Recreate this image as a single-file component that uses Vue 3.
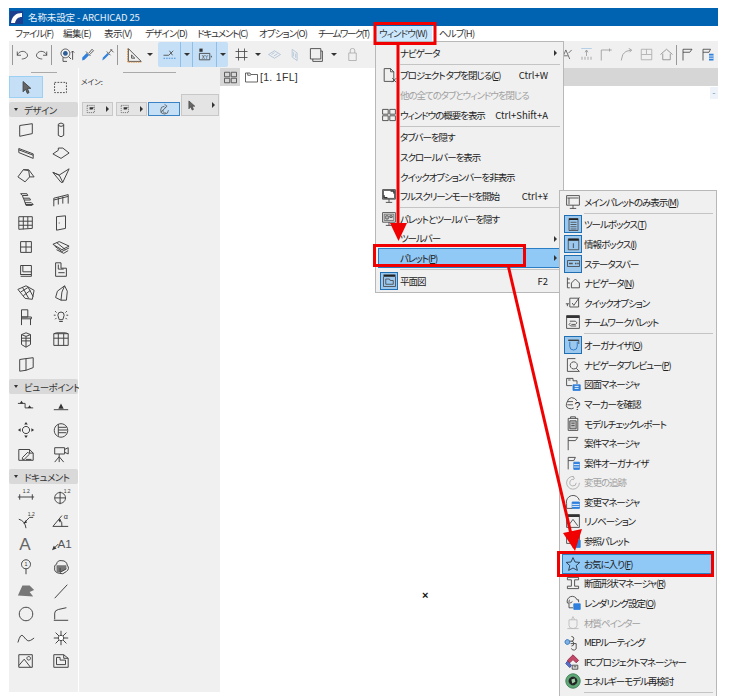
<script setup>
import { h } from 'vue'

// s = stroke path, object = filled path or little text
const BLUE = '#2f7fdc'
const ICONS = {
  wall: ['M3 5L17 3V14L3 17Z'],
  column: ['M7 3.5Q10 1 13 3.5V16Q10 19 7 16Z', 'M7 5Q10 7 13 5'],
  beam: ['M2 5L18 11V16L2 9.5Z', 'M2 6.5L18 12.5'],
  slab: ['M1 11L7 7V4.5L12 4.5L19 10L10 16Z'],
  roof: ['M1 11L7 3H13L19 11H14L13 4M14 11L9 16.5L1 11', 'M7 3L13 4'],
  shell: ['M1 6L8 9L19 2L12 17L8 9L1 6L10 17', 'M10 17H12'],
  stair: ['M4 3H11L12 5H6L4 3M6 5L7 8H14L15 10H8L7 8M8 10L9 13H16L18 15H10L9 13', 'M9 13L10 16H17'],
  rail: ['M2 17V8L18 4V14', 'M2 10L18 6', 'M7 7V15M12 6V14'],
  curtain: ['M2 3H17V16L2 17Z', 'M2 8H17M2 12.5H17', 'M7 3V17M12 3V16'],
  door: ['M5 3L15 2V16L5 18Z', 'M7.5 10H8.5'],
  window: ['M4 4H16V16H4Z', 'M4 10H16M10 4V16'],
  skylight: ['M1 7L8 4L19 9L11 13L1 7Z', 'M3 9L11 15L19 11', 'M5 13L13 17L18 14', 'M5 5L15 13'],
  corner: ['M4 5H16V15H4Z', 'M6.5 5V12H16', 'M4 15H16V17H4'],
  zone: ['M4 2H10V8H16V17H4Z', 'M7 4V9H13', 'M7 13H14'],
  mesh: ['M1 6L10 2L19 7L17 17L9 16L1 6', 'M4 9L12 4M7 13L15 7M6 3.5L13 16M12 3L18 14'],
  morph: ['M14 2L6 8L4 15L10 18H16L17 8Z', 'M14 2L11 9L10 18'],
  chair: ['M5 2H12V10H5Z', 'M5 10H16V12H5Z', 'M5 10V19M15 12V19'],
  lamp: ['M6.5 8A3.5 3.5 0 1 1 13.5 8L12 13H8Z', 'M8 15H12', 'M2 8H4M16 8H18M3.5 3.5L5 5M16.5 3.5L15 5M3.5 12.5L5 11M16.5 12.5L15 11'],
  object: ['M5 4L10 2L15 4V15L10 18L5 15Z', 'M5 4L10 6L15 4M10 6V18', 'M5 8L15 8M5 11L15 11'],
  cwall: ['M2 3H18V16H2Z', 'M2 8H18', 'M7 3V16M13 3V16', 'M2 3L5 2H15L18 3'],
  opening: ['M3 5L10 4V17L3 18Z', 'M10 4L18 3V14L10 17'],
  section1: ['M1 6H9', { d: 'M3 6L5 3L7 6Z', fill: '#333' }, 'M9 6V11H18', { d: 'M12 11L14 8L16 11Z', fill: '#333' }],
  section2: ['M2 13H18', { d: 'M7 12L10 6L13 12Z', fill: '#333' }],
  detail: ['M10 6a4 4 0 1 0 .01 0', { d: 'M10 1L12 4H8Z', fill: '#333' }, { d: 'M10 19L12 16H8Z', fill: '#333' }, { d: 'M1 10L4 8V12Z', fill: '#333' }, { d: 'M19 10L16 8V12Z', fill: '#333' }],
  worksheet: ['M10 3a7.5 7.5 0 1 0 .01 0', 'M7 3.5V16.5M7 10H17', 'M7 7H16M7 13H16'],
  elev: ['M2 5H14L18 9V17H2Z', 'M14 5V9H18', 'M6 14L12 8L14 10L8 16H6Z', 'M10 16H16'],
  camera: ['M3 3H14V10H3Z', 'M14 5L18 3V10L14 8', 'M8 10V13M8 13L3 19M8 13L13 19M8 13V19'],
  dim: ['M1 10H19', 'M3 7V13M17 7V13', { t: '1.2', x: 6.5, y: 6, s: 5.5 }],
  level: ['M9 4V18M3 11H15', 'M9 5A6 6 0 1 0 9.01 5', { t: '1.2', x: 13, y: 5, s: 5.5 }],
  radial: ['M2 8Q9 10 10 18', 'M8 12L14 6H18', { d: 'M7 13L10 9L11 12Z', fill: '#333' }, { t: '1.2', x: 12, y: 4.5, s: 5.5 }],
  angle: ['M1 16L11 4', 'M1 16H18', 'M8 8Q12 11 11 16', { d: 'M7 9L10 8L9 12Z', fill: '#333' }, { t: 'α', x: 13, y: 8, s: 8 }],
  textA: [{ t: 'A', x: 2.5, y: 17, s: 19, c: '#666' }],
  labelA: [{ d: 'M0 17L2 12L5 15Z', fill: '#333' }, 'M2 15L7 10', { t: 'A1', x: 6, y: 14, s: 13, c: '#555' }],
  change: ['M10 2A5 5 0 1 0 10.01 2', 'M10 12V18', { t: '1', x: 8.4, y: 9.3, s: 6 }],
  cloud: ['M5 7Q6 2 11 3Q16 3 17 8Q20 12 16 15Q12 19 8 17Q2 16 3 11Q2 8 5 7Z', { d: 'M5 8H16V12L9 16H5Z', fill: '#777' }, 'M9 11V16L16 12'],
  fill: [{ d: 'M1 15L6 4H14L19 9L14 11L18 16Z', fill: '#777' }],
  line: ['M3 18L17 3'],
  circle: ['M10 2.5A7.5 7.5 0 1 0 10.01 2.5'],
  spline0: ['M3 16V9Q3 6 7 5L16 3', 'M2 17H18'],
  spline: ['M1 15Q4 4 7 8T12 13T19 10'],
  hotspot: ['M10 2V18M2 10H18M4 4L16 16M16 4L4 16', { d: 'M10 7A3 3 0 1 0 10.01 7', fill: '#fff', stroke: '#444' }],
  figure: ['M2 3H17V17H2Z', 'M2 15L8 8L15 17', 'M13 5A2 2 0 1 0 13.01 5'],
  drawing: ['M2 3H13L18 7V17H2Z', 'M13 3V7H18', 'M5 6H9V9H15V14H5Z'],

  arrow: [{ d: 'M6 3L15 11H11L13 16L11 17L9 12L6 15Z', fill: '#666', stroke: '#444' }],
  marquee: [{ d: 'M3 4H17V16H3Z', dash: '2 1.5' }],
  selPts: [{ d: 'M2 4H14V16H2Z', dash: '2 1.5' }, { d: 'M6 7H13L11 11H6Z', fill: '#333' }],
  rotate: ['M10 5A6 6 0 1 0 16 11', 'M4 14L12 7', 'M10 2L14 5L10 8', 'M8 11A3 3 0 0 0 12 15'],
  grid4: ['M2 3H9V9H2ZM11 3H18V9H11ZM2 11H9V17H2ZM11 11H18V17H11Z'],
  plan: ['M2 4H8L9 6H18V16H2Z', 'M5 4V7H9'],
  undo: ['M3 11C5 5 13 4 16 9S12 16 9 16', 'M3 6V11H8'],
  redo: ['M17 11C15 5 7 4 4 9S8 16 11 16', 'M17 6V11H12'],
  bar: ['M10 3V17'],
  find: ['M8 2.5A5.5 5.5 0 1 0 8.01 2.5', { d: 'M8 5A3 3 0 1 0 8.01 5', fill: '#2d5f96' }, 'M5 13V18H10M12 12L15 15', 'M17 5V16M15 7L17 5L19 7'],
  dropper: [{ d: 'M3 18L3 14L9 8L12 11L6 17Z', fill: BLUE }, 'M8 6L14 12M12 8L16 3L18 5L13 10'],
  injector: [{ d: 'M3 18L4 14L10 8L12 10L6 16Z', fill: BLUE }, 'M9 6L14 11M12 8L16 3M14 3L18 7'],
  tri: ['M3 2V18H19Z', 'M7 10V14H11Z', { d: 'M2 2V19H19', dash: '2 1', stroke: '#e0913a' }],
  snap: ['M2 11H9M9 11L15 5M10 5L14 11', { d: 'M2 15H18', dash: '2 1.5', stroke: BLUE }],
  xy: [{ d: 'M3 2H7V6H3Z', fill: '#333' }, 'M3 8H16V16H3Z', { t: 'XY', x: 6, y: 14.5, s: 6 }, 'M18 11V13'],
  hash: ['M2 6H18M2 14H18M6 2V18M14 2V18'],
  hatchA: [{ d: 'M2 10L10 5L18 10L10 15Z', stroke: '#a9bfd4' }, { d: 'M6 10L10 7.5M9 12L14 9', stroke: '#a9bfd4' }],
  wallA: [{ d: 'M6 2L13 7V18L6 13Z', stroke: '#a9bfd4' }, { d: 'M8 6V12M11 8V14', stroke: '#a9bfd4' }],
  layers: ['M3 2H16V15H3Z', 'M6 15V18H18V5H16'],
  lock: [{ d: 'M7 8V4Q7 2 10 2T13 4V8M5 8H15V18H5Z', stroke: '#aaa' }],
  zoomA: ['M3 17L9 3L15 17M6 12H12', 'M13 8L18 3'],
  align1: [{ d: 'M3 2H17', stroke: '#a9c7e6' }, { d: 'M10 4V12M8 7L10 4L12 7', stroke: '#999' }, { d: 'M4 17V13M8 17V13M12 17V13M16 17V13', stroke: '#999' }],
  corner1: [{ d: 'M3 18V4H17M14 2V6', stroke: '#999' }],
  corner2: [{ d: 'M3 18L5 10Q8 5 16 4M13 2L17 4L14 7', stroke: '#999' }],
  frame: [{ d: 'M3 3H17V17H3ZM10 3V10H3M10 10H17', stroke: '#aaa' }],
  house: [{ d: 'M2 10L10 3L18 10M5 9V17H15V9', stroke: '#888' }],
  flag: ['M4 18V3H16L13 7H4'],
  flagList: ['M4 18V3H14L12 7H4', { d: 'M12 9H18V18H12Z', fill: BLUE }, { d: 'M12 12H18M12 15H18', stroke: '#fff' }],

  docClose: ['M4 2H12L16 6V18H4Z', 'M12 2V6H16', 'M14 14L19 19M19 14L14 19'],
  monitorFull: ['M2 2H18V14H2Z', 'M10 14V18M6 18H14', { d: 'M3 3H17V13H3Z', fill: '#fff', stroke: '#444' }, { d: 'M4 9V12H8M16 7V4H12', stroke: '#000' }],
  monitorHide: ['M2 2H18V14H2Z', 'M10 14V18M6 18H14', { d: 'M4 4H16V12H4Z', fill: '#ddd', stroke: '#666' }, 'M6 6H9V10H6ZM11 6H14V8H11Z'],
  monitorMain: ['M2 2H18V14H2Z', 'M10 14V18M6 18H14', 'M3 5H17', 'M5 5V13'],
  toolbox: ['M4 2H16V18H4Z', { d: 'M4 2H16V4H4Z', fill: '#222' }, 'M6 7H14M6 10H14M6 13H14M6 16H14'],
  info: ['M3 3H17V17H3Z', { d: 'M3 2H17V5H3Z', fill: '#222' }, { t: 'i', x: 8.7, y: 15, s: 10, c: '#111' }],
  status: ['M2 6H18V14H2Z', { d: 'M4 9H9V11H4ZM12 9H14V11H12ZM15 9H17V11H15Z', fill: '#555' }],
  navigator: ['M3 3V16M3 5H6M3 10H6M3 16H6', 'M8 10L13 5L18 10V16H8Z'],
  quick: ['M6 4H17V15H6Z', 'M9 10L11 13L18 3', 'M1 11H5', 'M3 11V14'],
  team: ['M2 2H18V18H2Z', { d: 'M2 2H18V5H2Z', fill: '#333' }, 'M6 9H13L15 11L13 13H8', 'M14 15H7L5 13L7 11'],
  organizer: ['M3 3H17V8', { d: 'M5 5V11A5 5 0 0 0 15 11V5', stroke: '#1f6fc0' }, { d: 'M3 3H17', stroke: '#222' }],
  preview: ['M3 2H13M3 2V18H18', 'M11 6A4.5 4.5 0 1 0 11.01 6', 'M14 14L18 18'],
  sheet: ['M2 3H10V6H15V10', 'M2 3V12H9', { d: 'M10 11H19V18H10Z', fill: BLUE, stroke: BLUE }, { d: 'M12 13H17M12 15.5H17', stroke: '#fff' }, 'M4 5H7'],
  marker: ['M15 6Q12 2 8 2T2 9T8 16L11 15', 'M3 7H10M3 11H10', { t: '?', x: 12, y: 18, s: 13, c: '#111' }],
  model: ['M4 3H16V18H4Z', 'M7 3V1H13V3', { d: 'M6 6H14V16H6Z', fill: '#bbb', stroke: '#444' }, 'M8 9H12M8 12H12'],
  issue: ['M4 19V3H16L13 7H4'],
  issueList: ['M4 18V3H13L11 7H4', { d: 'M11 9H18V18H11Z', fill: BLUE, stroke: BLUE }, { d: 'M11 12H18M11 15H18', stroke: '#fff' }],
  track: [{ d: 'M11 3A8 8 0 1 0 18 11', stroke: '#aaa' }, { d: 'M11 7A4 4 0 1 0 14 11M9 3L12 5L10 7', stroke: '#aaa' }],
  changeM: ['M2 12A8 8 0 0 1 18 8', { d: 'M9 10H18V18H9Z', fill: BLUE, stroke: BLUE }, { d: 'M9 13H18M9 15.5H18', stroke: '#fff' }, 'M2 12V18H9'],
  reno: ['M2 2H18V18H2Z', { d: 'M2 2H18V5H2Z', fill: '#333' }, 'M4 16L10 8L16 16'],
  ref: ['M2 2H18V13H2Z', 'M10 13V18', { d: 'M10 9H19V18H10Z', fill: BLUE, stroke: BLUE }],
  star: [{ d: 'M10 2L12.5 7.5L18.5 8L14 12L15.5 18L10 15L4.5 18L6 12L1.5 8L7.5 7.5Z', stroke: '#234' }],
  profile: ['M3 3H17V6H12V14H17V17H3V14H8V6H3Z'],
  render: ['M3 10A6 6 0 0 1 15 6H17V9', 'M3 10H5V16H10', { d: 'M11 11H19V18H11Z', fill: BLUE, stroke: BLUE }, 'M6 6A2 2 0 1 0 9 8'],
  paint: [{ d: 'M3 17H17M5 6H15V13Q15 17 10 17T5 13ZM8 6L10 2L12 6', stroke: '#bbb' }],
  mep: [{ d: 'M3 7A3 3 0 1 0 3.01 7', fill: '#7fb2e5', stroke: '#2f6fb5' }, 'M8 3A3 3 0 1 1 8 9H6', 'M8 9A3 3 0 1 1 8 15', 'M7 12H14V16A3 3 0 0 1 8 18'],
  ifc: [{ d: 'M10 1L17 8L14 11L10 7L6 11L3 8Z', fill: '#c34868', stroke: '#8f2b47' }, { d: 'M3 9L8 14L6 17L1 12Z', fill: '#5a6fc4', stroke: '#36499b' }, { d: 'M9 14L16 14V19H9Z', fill: '#ddd', stroke: '#444' }, 'M11 16H14'],
  energy: [{ d: 'M10 1A9 9 0 1 0 10.01 1', fill: '#5fa777', stroke: '#3f7f58' }, { d: 'M10 5A5 5 0 1 0 10.01 5', fill: '#222', stroke: '#222' }, { d: 'M8 8L12 7L13 11L9 13Z', fill: '#9fd0aa', stroke: 'none' }],
  planTile: [{ d: 'M2 2H18V5H2Z', fill: '#222' }, 'M2 5V18H18V5', 'M5 8H10L11 10H15V15H5Z'],
}

const Ico = (props) => h('svg', {
  width: props.size || 18,
  height: props.size || 18,
  viewBox: '0 0 20 20',
  style: 'flex:none;display:block;overflow:visible',
}, (ICONS[props.name] || []).map((p) => {
  if (typeof p === 'string') return h('path', { d: p, fill: 'none', stroke: '#444', 'stroke-width': 1.1 })
  if (p.t) return h('text', { x: p.x, y: p.y, 'font-size': p.s, fill: p.c || '#333', 'font-family': 'Liberation Sans, sans-serif' }, p.t)
  return h('path', { d: p.d, fill: p.fill || 'none', stroke: p.stroke || (p.fill ? 'none' : '#444'), 'stroke-width': 1.1, 'stroke-dasharray': p.dash })
}))
Ico.props = ['name', 'size']

const menus = [
  { label: 'ファイル(F)', w: 48, ls: -0.9 },
  { label: '編集(E)', w: 41, ls: -0.6 },
  { label: '表示(V)', w: 41, ls: -0.6 },
  { label: 'デザイン(D)', w: 52, ls: -0.8 },
  { label: 'ドキュメント(C)', w: 62, ls: -1.2 },
  { label: 'オプション(O)', w: 59, ls: -0.9 },
  { label: 'チームワーク(T)', w: 59, ls: -1.6 },
]

const designTools = ['wall', 'column', 'beam', 'slab', 'roof', 'shell', 'stair', 'rail', 'curtain', 'door', 'window', 'skylight', 'corner', 'zone', 'mesh', 'morph', 'chair', 'lamp', 'object', 'cwall', 'opening']
const viewTools = ['section1', 'section2', 'detail', 'worksheet', 'elev', 'camera']
const docTools = ['dim', 'level', 'radial', 'angle', 'textA', 'labelA', 'change', 'cloud', 'fill', 'line', 'circle', 'spline0', 'spline', 'hotspot', 'figure', 'drawing']

const windowMenu = [
  { label: 'ナビゲータ', arrow: true },
  { sep: true },
  { label: 'プロジェクト タブを閉じる', key: 'C', icon: 'docClose', short: 'Ctrl+W' },
  { label: '他の全てのタブとウィンドウを閉じる', off: true },
  { label: 'ウィンドウの概要を表示', icon: 'grid4', short: 'Ctrl+Shift+A' },
  { sep: true },
  { label: 'タブバーを隠す' },
  { label: 'スクロールバーを表示' },
  { label: 'クイックオプションバーを非表示' },
  { label: 'フルスクリーンモードを開始', icon: 'monitorFull', short: 'Ctrl+¥' },
  { sep: true },
  { label: 'パレットとツールバーを隠す', icon: 'monitorHide' },
  { label: 'ツールバー', arrow: true },
  { label: 'パレット', key: 'P', arrow: true, on: true },
  { sep: true },
  { label: '平面図', icon: 'planTile', tile: true, short: 'F2' },
]

const paletteMenu = [
  { label: 'メインパレットのみ表示', key: 'M', icon: 'monitorMain' },
  { sep: true },
  { label: 'ツールボックス', key: 'T', icon: 'toolbox', tile: true },
  { label: '情報ボックス', key: 'I', icon: 'info', tile: true },
  { label: 'ステータスバー', icon: 'status', tile: true },
  { label: 'ナビゲータ', key: 'N', icon: 'navigator' },
  { label: 'クイックオプション', icon: 'quick' },
  { label: 'チームワークパレット', icon: 'team' },
  { sep: true },
  { label: 'オーガナイザ', key: 'O', icon: 'organizer', tile: true },
  { label: 'ナビゲータプレビュー', key: 'P', icon: 'preview' },
  { label: '図面マネージャ', icon: 'sheet' },
  { label: 'マーカーを確認', icon: 'marker' },
  { label: 'モデルチェックレポート', icon: 'model' },
  { label: '案件マネージャ', icon: 'issue' },
  { label: '案件オーガナイザ', icon: 'issueList' },
  { label: '変更の追跡', icon: 'track', off: true },
  { label: '変更マネージャ', icon: 'changeM' },
  { label: 'リノベーション', icon: 'reno' },
  { label: '参照パレット', icon: 'ref' },
  { sep: true },
  { label: 'お気に入り', key: 'F', icon: 'star', on: true },
  { label: '断面形状マネージャ', key: 'R', icon: 'profile' },
  { label: 'レンダリング設定', key: 'O', icon: 'render' },
  { label: '材質ペインター', icon: 'paint', off: true },
  { label: 'MEPルーティング', icon: 'mep' },
  { label: 'IFCプロジェクトマネージャー', icon: 'ifc' },
  { label: 'エネルギーモデル再検討', icon: 'energy' },
  { sep: true },
  { label: '' },
]
</script>

<template>
  <div class="page">
    <div class="win">
      <div class="titlebar">
        <svg class="logo" width="13" height="13" viewBox="0 0 13 13">
          <rect width="13" height="13" fill="#1d3f8f" />
          <path d="M1 12C2 5 6 2 12 2V6C8 6 6 8 5 12Z" fill="#fff" />
        </svg>
        <span>名称未設定 - ARCHICAD 25</span>
      </div>

      <div class="menubar">
        <span v-for="m in menus" :key="m.label" class="mb-item" :style="{ width: m.w + 'px', letterSpacing: m.ls + 'px' }">{{ m.label }}</span>
        <span class="mb-item mb-active">ウィンドウ(W)</span>
        <span class="mb-item">ヘルプ(H)</span>
      </div>

      <div class="toolbar">
        <div class="tb-group g-a">
          <i class="tb-sep"></i>
          <span class="slot s19"><Ico name="undo" :size="15" /></span>
          <span class="slot s19"><Ico name="redo" :size="15" /></span>
          <i class="tb-sep"></i>
        </div>
        <div class="tb-group g-b">
          <span class="slot s20"><Ico name="find" :size="16" /></span>
          <span class="slot s20"><Ico name="dropper" :size="15" /></span>
          <span class="slot s20"><Ico name="injector" :size="15" /></span>
          <i class="tb-sep"></i>
        </div>
        <span class="slot s16 g-c"><Ico name="tri" :size="16" /></span>
        <span class="slot s16"><i class="caret"></i></span>
        <div class="tb-blue">
          <span class="slot s22"><Ico name="snap" :size="15" /></span>
          <span class="slot s12 bl"><i class="caret"></i></span>
          <span class="slot s24 bl"><Ico name="xy" :size="16" /></span>
          <span class="slot s12 bl"><i class="caret"></i></span>
        </div>
        <span class="slot s22 g-d"><Ico name="hash" :size="15" /></span>
        <span class="slot s12"><i class="caret"></i></span>
        <span class="slot s20"><Ico name="hatchA" :size="15" /></span>
        <span class="slot s22"><Ico name="wallA" :size="14" /></span>
        <span class="slot s20"><Ico name="layers" :size="16" /></span>
        <span class="slot s16"><i class="caret"></i></span>
        <span class="slot s20"><Ico name="lock" :size="15" /></span>
        <div class="tb-right">
          <span class="slot s20"><Ico name="zoomA" :size="13" /></span>
          <span class="slot s20"><Ico name="align1" :size="15" /></span>
          <span class="slot s20"><Ico name="corner1" :size="15" /></span>
          <span class="slot s20"><Ico name="corner2" :size="15" /></span>
          <span class="slot s20"><Ico name="frame" :size="15" /></span>
          <span class="slot s20"><Ico name="house" :size="15" /></span>
          <i class="tb-sep"></i>
          <span class="slot s20"><Ico name="flag" :size="15" /></span>
          <span class="slot s20"><Ico name="flagList" :size="15" /></span>
        </div>
      </div>

      <div class="body">
        <div class="toolbox">
          <i class="handle"></i>
          <div class="tool-row top-row">
            <span class="tool selected"><Ico name="arrow" :size="17" /></span>
            <span class="tool"><Ico name="marquee" :size="17" /></span>
          </div>
          <div class="group-head"><i class="tri-down"></i>デザイン</div>
          <div class="tool-grid">
            <span v-for="t in designTools" :key="t" class="tool"><Ico :name="t" /></span>
          </div>
          <div class="group-head"><i class="tri-down"></i>ビューポイント</div>
          <div class="tool-grid">
            <span v-for="t in viewTools" :key="t" class="tool"><Ico :name="t" /></span>
          </div>
          <div class="group-head"><i class="tri-down"></i>ドキュメント</div>
          <div class="tool-grid">
            <span v-for="t in docTools" :key="t" class="tool"><Ico :name="t" /></span>
          </div>
        </div>

        <div class="infobox">
          <i class="handle info-handle"></i>
          <div class="info-label">メイン:</div>
          <div class="info-row">
            <span class="info-btn w30"><Ico name="selPts" :size="12" /><i class="caret small"></i></span>
            <span class="info-btn w31"><Ico name="selPts" :size="12" /><i class="caret small"></i></span>
            <span class="info-btn w32 on"><Ico name="rotate" :size="13" /></span>
            <span class="info-btn tall"><Ico name="arrow" :size="13" /><i class="caret small"></i></span>
          </div>
        </div>

        <div class="canvas">
          <div class="tabbar">
            <span class="tab-grid"><Ico name="grid4" :size="15" /></span>
            <span class="tab"><Ico name="plan" :size="15" />[1. 1FL]</span>
          </div>
          <div class="viewport">
            <span class="mini-btn">-</span>
            <span class="cursor">×</span>
          </div>
        </div>
      </div>
    </div>

    <div class="menu menu-window">
      <template v-for="(it, i) in windowMenu" :key="i">
        <div v-if="it.sep" class="sep"><i></i></div>
        <div v-else class="row" :class="{ on: it.on, off: it.off }">
          <span class="gutter" :class="{ tile: it.tile }"><Ico v-if="it.icon" :name="it.icon" :size="it.tile ? 15 : 16" /></span>
          <span class="label">{{ it.label }}<template v-if="it.key">(<u>{{ it.key }}</u>)</template></span>
          <span v-if="it.short" class="short">{{ it.short }}</span>
          <i v-if="it.arrow" class="sub-arrow"></i>
        </div>
      </template>
    </div>

    <div class="menu menu-palette">
      <template v-for="(it, i) in paletteMenu" :key="i">
        <div v-if="it.sep" class="sep"><i></i></div>
        <div v-else class="row" :class="{ on: it.on, off: it.off }">
          <span class="gutter" :class="{ tile: it.tile }"><Ico v-if="it.icon" :name="it.icon" :size="it.tile ? 15 : 16" /></span>
          <span class="label">{{ it.label }}<template v-if="it.key">(<u>{{ it.key }}</u>)</template></span>
        </div>
      </template>
    </div>

    <svg class="notes" width="729" height="696" viewBox="0 0 729 696">
      <g fill="none" stroke="#f00000" stroke-width="3">
        <rect x="375" y="23.5" width="60" height="20" />
        <rect x="374.500" y="245.500" width="150" height="20" />
        <rect x="558.500" y="552.500" width="154" height="23" />
      </g>
      <path d="M398 44V224" stroke="#f00000" stroke-width="3" />
      <path d="M390 223H407L398.500 241Z" fill="#f00000" />
      <path d="M508.500 267L571 534" stroke="#f00000" stroke-width="3" />
      <path d="M563 533L582 529L575 551Z" fill="#f00000" />
    </svg>
  </div>
</template>

<style>
html, body { margin: 0; background: #fff; }
</style>

<style scoped>
.page {
  position: relative;
  width: 729px;
  height: 696px;
  overflow: hidden;
  background: #fff;
  padding: 8px 11px 4px 9px;
  box-sizing: border-box;
  font-family: "Noto Sans CJK JP", "Liberation Sans", sans-serif;
  font-feature-settings: "palt";
  font-size: 9.5px;
  color: #222;
}
.win {
  display: flex;
  flex-direction: column;
  height: 100%;
}

.titlebar {
  height: 18px;
  background: #0063b1;
  color: #e8f0f8;
  display: flex;
  align-items: center;
  gap: 5px;
  padding-left: 1px;
  font-size: 9.5px;
  letter-spacing: -0.1px;
}
.logo { flex: none; }

.menubar {
  height: 15px;
  display: flex;
  align-items: center;
  padding-left: 2px;
  background: #fff;
  font-size: 9.5px;
  letter-spacing: -0.9px;
  color: #333;
}
.mb-item { padding: 0 0 0 4px; line-height: 15px; white-space: nowrap; box-sizing: border-box; flex: none; }
.mb-active { background: #cce8ff; width: 57px; margin: 0 3px 0 2px; }

.toolbar {
  height: 27px;
  background: #f0f0f0;
  display: flex;
  align-items: center;
}
.tb-group { display: flex; align-items: center; }
.tb-sep { width: 1px; height: 20px; background: #999; flex: none; }
.g-a { margin-left: 3px; }
.g-b { margin-left: 5px; }
.g-c { margin-left: 8px; }
.g-d { margin-left: 2px; }
.slot { display: flex; align-items: center; justify-content: center; height: 24px; flex: none; }
.s12 { width: 12px; }
.s16 { width: 16px; }
.s19 { width: 19px; }
.s20 { width: 20px; }
.s22 { width: 22px; }
.s24 { width: 24px; }
.caret {
  width: 0;
  height: 0;
  border-left: 3px solid transparent;
  border-right: 3px solid transparent;
  border-top: 3px solid #333;
}
.caret.small {
  border-top: 3px solid transparent;
  border-bottom: 3px solid transparent;
  border-left: 3px solid #333;
  border-right: 0;
}
.tb-blue {
  display: flex;
  background: #c4dff6;
  border-radius: 2px;
  height: 25px;
  align-items: center;
}
.bl { border-left: 1px solid #8fbfe8; box-sizing: border-box; height: 25px; }
.tb-right { margin-left: auto; display: flex; align-items: center; padding-right: 1px; }

.body { flex: 1; display: flex; min-height: 0; }
.toolbox {
  width: 69px;
  background: #f0f0f0;
  display: flex;
  flex-direction: column;
  align-items: stretch;
  flex: none;
}
.handle { display: block; height: 1px; background: #aaa; width: 26px; margin: 4px auto 3px 22px; }
.tool-row { display: grid; grid-template-columns: 34px 35px; height: 22px; }
.tool { display: flex; align-items: center; justify-content: center; height: 23.4px; }
.top-row .tool { height: 22px; }
.selected { background: #c4dff6; border: 1px solid #9cd0f5; box-sizing: border-box; }
.group-head {
  height: 15px;
  margin-top: 4px;
  background: #d9d9d9;
  border-radius: 2px;
  display: flex;
  align-items: center;
  gap: 6px;
  padding-left: 5px;
  font-size: 9.5px;
  letter-spacing: -0.5px;
  color: #333;
  white-space: nowrap;
}
.tri-down {
  width: 0;
  height: 0;
  border-left: 2.5px solid transparent;
  border-right: 2.5px solid transparent;
  border-top: 3px solid #333;
}
.tool-grid { display: grid; grid-template-columns: 34px 35px; padding-top: 1px; }

.infobox {
  width: 141px;
  margin-left: 1px;
  background: #f0f0f0;
  flex: none;
  display: flex;
  flex-direction: column;
}
.info-handle { width: 53px; margin: 4px 0 0 44px; }
.info-label { font-size: 7.5px; padding: 3px 0 0 2px; height: 15px; color: #333; line-height: 12px; }
.info-row { display: flex; align-items: flex-end; padding-left: 3px; gap: 1px; height: 22px; margin-top: 3px; }
.info-btn {
  height: 14px;
  display: flex;
  align-items: center;
  justify-content: space-between;
  padding: 0 3px;
  background: #e4e4e4;
  border: 1px solid #c8c8c8;
  box-sizing: border-box;
}
.w30 { width: 31px; margin-right: 2px; }
.w31 { width: 31px; }
.w32 { width: 32px; justify-content: center; }
.info-btn.on { background: #c4dff6; border-color: #3b82c4; }
.tall { width: 38px; height: 22px; }

.canvas { flex: 1; display: flex; flex-direction: column; background: #fff; min-width: 0; }
.tabbar { height: 18px; background: #d6d6d6; display: flex; }
.tab-grid { width: 20px; display: flex; align-items: center; justify-content: center; }
.tab {
  width: 210px;
  background: #fff;
  display: flex;
  align-items: center;
  gap: 1px;
  padding-left: 4px;
  font-family: "Liberation Sans", sans-serif;
  font-size: 10.5px;
  letter-spacing: 0.3px;
  color: #333;
}
.viewport { flex: 1; position: relative; }
.mini-btn {
  position: absolute;
  right: 0;
  top: 1px;
  width: 8px;
  height: 12px;
  background: #eef3f9;
  text-align: center;
  line-height: 11px;
  color: #7a9cc0;
}
.cursor {
  position: absolute;
  left: 202px;
  top: 503px;
  font: bold 11px "Liberation Sans", sans-serif;
  color: #111;
}

.menu {
  position: absolute;
  background: #f0f0f0;
  border: 1px solid #b8b8b8;
  box-sizing: border-box;
  padding: 1px 2px;
  font-size: 9.5px;
  color: #222;
}
.menu-window { left: 375px; top: 41px; width: 189px; height: 252px; }
.menu-palette { left: 559px; top: 190px; width: 158px; height: 520px; }
.row {
  height: 19.6px;
  display: flex;
  align-items: center;
  position: relative;
  box-sizing: border-box;
  white-space: nowrap;
}
.row.on { background: #90c8f6; outline: 1px solid #2a7fc4; outline-offset: -1px; }
.row.off { color: #a0a0a0; }
.gutter {
  width: 21px;
  height: 19.6px;
  flex: none;
  display: flex;
  align-items: center;
  justify-content: center;
  margin-right: 1px;
  box-sizing: border-box;
}
.gutter.tile { background: #9cc8ee; border: 1px solid #1f6fb2; width: 18px; margin: 0 2px 0 2px; height: 18px; }
.label { flex: 1; letter-spacing: -1.05px; }
u { text-underline-offset: 1px; }
.short { padding-right: 13px; font-size: 9.5px; }
.sub-arrow {
  position: absolute;
  right: 4px;
  top: 7px;
  border-top: 3px solid transparent;
  border-bottom: 3px solid transparent;
  border-left: 3px solid #333;
}
.sep { height: 3.1px; padding-left: 22px; display: flex; align-items: center; }
.sep i { display: block; height: 1px; width: 100%; background: #c4c4c4; margin-right: 1px; }

.notes { position: absolute; left: 0; top: 0; pointer-events: none; }
</style>
